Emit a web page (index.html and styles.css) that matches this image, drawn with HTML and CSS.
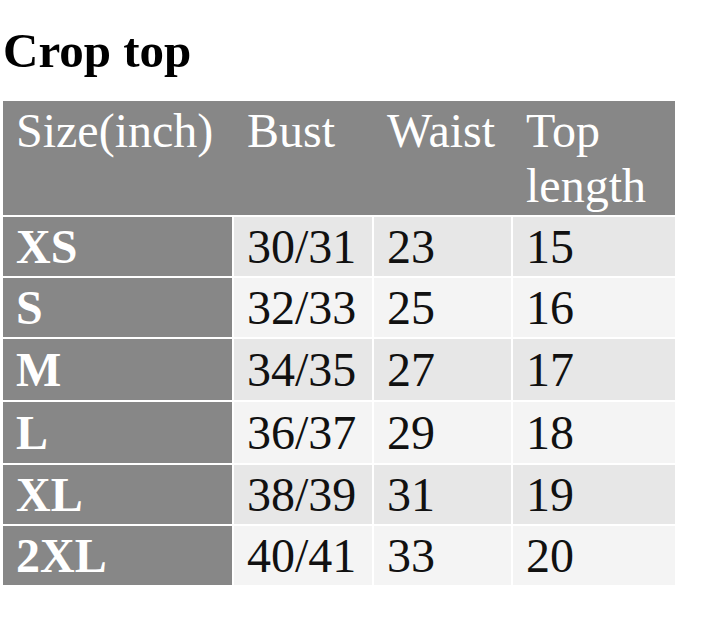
FILE: index.html
```html
<!DOCTYPE html>
<html>
<head>
<meta charset="utf-8">
<link rel="stylesheet" href="styles.css">
</head>
<body>
<div class="page">
  <h1 class="title">Crop top</h1>
  <table class="sizes">
    <thead>
      <tr>
        <th class="c1">Size(inch)</th>
        <th class="c2">Bust</th>
        <th class="c3">Waist</th>
        <th class="c4">Top length</th>
      </tr>
    </thead>
    <tbody>
      <tr class="odd"><th>XS</th><td>30/31</td><td>23</td><td>15</td></tr>
      <tr class="even"><th>S</th><td>32/33</td><td>25</td><td>16</td></tr>
      <tr class="odd tall"><th>M</th><td>34/35</td><td>27</td><td>17</td></tr>
      <tr class="even tall"><th>L</th><td>36/37</td><td>29</td><td>18</td></tr>
      <tr class="odd"><th>XL</th><td>38/39</td><td>31</td><td>19</td></tr>
      <tr class="even"><th>2XL</th><td>40/41</td><td>33</td><td>20</td></tr>
    </tbody>
  </table>
</div>
</body>
</html>
```
FILE: styles.css
```css
html, body {
  margin: 0;
  padding: 0;
  background: #ffffff;
}
.page {
  font-family: "Liberation Serif", "Times New Roman", serif;
  padding-left: 1px;
}
.title {
  font-size: 49px;
  font-weight: bold;
  line-height: 55px;
  margin: 23px 0 21px 2px;
  color: #000;
}
.sizes {
  border-collapse: separate;
  border-spacing: 2px;
  table-layout: fixed;
  width: 676px;
  font-size: 48px;
  line-height: 55px;
}
.sizes th, .sizes td {
  box-sizing: border-box;
  padding: 2px 12px 2px 13px;
  text-align: left;
  vertical-align: top;
}
.sizes thead th {
  background: #878787;
  color: #fff;
  font-weight: normal;
  height: 114px;
  box-shadow: 2px 0 0 #878787;
}
.sizes thead th.c4 {
  box-shadow: none;
}
.c1 { width: 229px; }
.c2 { width: 138px; }
.c3 { width: 137px; }
.c4 { width: 162px; }
.sizes tbody th {
  background: #878787;
  color: #fff;
  font-weight: bold;
  height: 59px;
}
.sizes tbody td {
  color: #111;
  height: 59px;
}
.sizes tbody .tall th,
.sizes tbody .tall td {
  height: 61px;
  padding-top: 3px;
}
.odd td { background: #e7e7e7; }
.even td { background: #f4f4f4; }
```
